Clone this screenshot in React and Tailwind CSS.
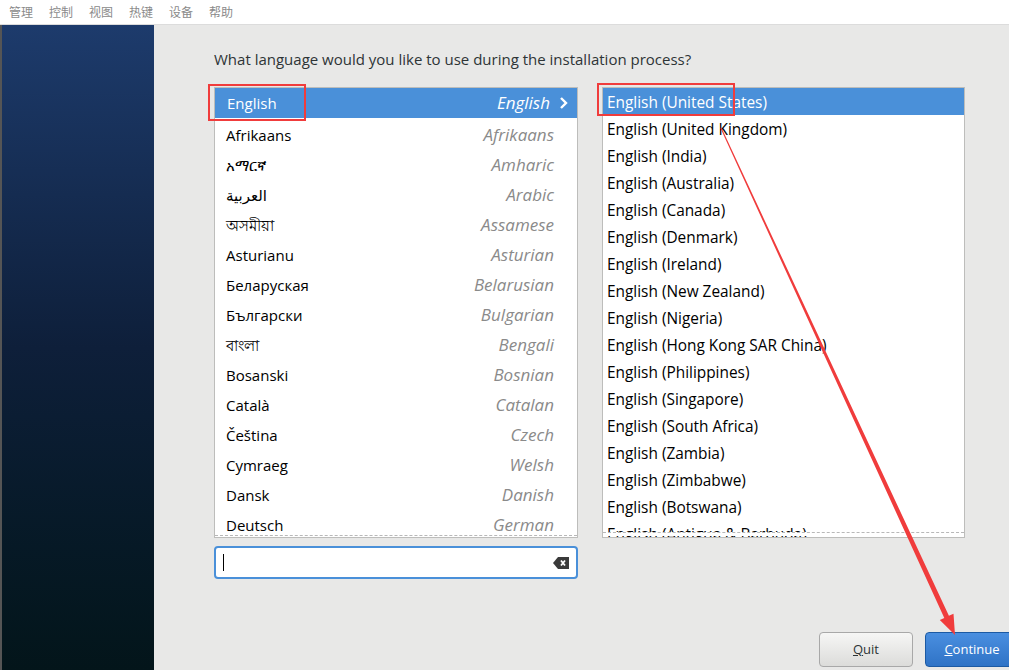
import React from "react";

const menu = ["管理", "控制", "视图", "热键", "设备", "帮助"];

const langs = [
  ["Afrikaans", "Afrikaans"],
  ["አማርኛ", "Amharic"],
  ["العربية", "Arabic"],
  ["অসমীয়া", "Assamese"],
  ["Asturianu", "Asturian"],
  ["Беларуская", "Belarusian"],
  ["Български", "Bulgarian"],
  ["বাংলা", "Bengali"],
  ["Bosanski", "Bosnian"],
  ["Català", "Catalan"],
  ["Čeština", "Czech"],
  ["Cymraeg", "Welsh"],
  ["Dansk", "Danish"],
  ["Deutsch", "German"],
];

const locales = [
  "United Kingdom",
  "India",
  "Australia",
  "Canada",
  "Denmark",
  "Ireland",
  "New Zealand",
  "Nigeria",
  "Hong Kong SAR China",
  "Philippines",
  "Singapore",
  "South Africa",
  "Zambia",
  "Zimbabwe",
  "Botswana",
  "Antigua & Barbuda",
];

const font = { fontFamily: '"Open Sans", "DejaVu Sans", "Noto Sans", sans-serif' };

function LanguageList() {
  return (
    <div className="w-[364px] h-[451px] bg-white border border-[#bdbdbb] overflow-hidden relative">
      <div className="h-[31px] bg-[#4a90d9] flex items-center pl-[12px] pr-[8px] text-white text-[15px] border-b border-white">
        <span className="flex-1">English</span>
        <span className="italic text-[17px] mr-[9px]">English</span>
        <svg width="10" height="14" viewBox="0 0 10 14">
          <path d="M2 2 L7 7 L2 12" stroke="white" strokeWidth="2.4" fill="none" />
        </svg>
      </div>
      {langs.map(([n, e]) => (
        <div key={e} className="h-[30px] flex items-center pt-[2px] pl-[11px] pr-[23px] text-[15px] text-black">
          <span className="flex-1">{n}</span>
          <span className="italic text-[17px] text-[#8a8a8a]">{e}</span>
        </div>
      ))}
      <div className="absolute left-0 right-0 bottom-[1px] border-t border-dashed border-[#b8b8b8]" />
    </div>
  );
}

function LocaleList() {
  return (
    <div className="w-[363px] h-[451px] bg-white border border-[#bdbdbb] overflow-hidden relative">
      <div className="h-[27px] bg-[#4a90d9] flex items-center pt-[2px] pl-[4px] text-white text-[15.4px]">
        English (United States)
      </div>
      {locales.map((l) => (
        <div key={l} className="h-[27px] flex items-center pt-[2px] pl-[4px] text-[15.4px] text-black">
          English ({l})
        </div>
      ))}
      <div className="absolute left-0 right-0 bottom-[1px] h-[4px] bg-white border-t border-dashed border-[#b8b8b8]" />
    </div>
  );
}

export default function App() {
  return (
    <div className="w-[1009px] h-[670px] flex flex-col overflow-hidden relative" style={font}>
      <div className="h-[25px] shrink-0 bg-white border-b border-[#dcdcdc] flex items-center pl-[9px] gap-[16px] text-[12px] text-[#8a8a8a]" style={{ fontFamily: '"Noto Sans CJK SC", sans-serif' }}>
        {menu.map((m) => (
          <span key={m} className="w-[24px]">{m}</span>
        ))}
      </div>
      <div className="flex flex-1 min-h-0">
        <div className="w-[154px] shrink-0 bg-gradient-to-b from-[#1d3b6c] via-[#0e1f3a] to-[#03151a] border-l-2 border-[#555]" />
        <div className="flex-1 min-w-0 bg-[#e8e8e7] pl-[60px] pt-[24px] flex flex-col relative">
          <div className="text-[15px] text-[#2e3436] h-[20px] flex items-center whitespace-nowrap">
            What language would you like to use during the installation process?
          </div>
          <div className="flex gap-[24px] mt-[18px]">
            <div className="flex flex-col gap-[8px] shrink-0">
              <LanguageList />
              <div className="w-[364px] h-[33px] bg-white border-2 border-[#4a90d9] rounded-[4px] flex items-center px-[7px]">
                <div className="w-[1px] h-[17px] bg-black" />
                <div className="flex-1" />
                <svg width="16" height="12" viewBox="0 0 16 12">
                  <path d="M5 0 H16 V12 H5 L0 6 Z" fill="#3a3a3a" />
                  <path d="M8 3.5 L12 8.5 M12 3.5 L8 8.5" stroke="white" strokeWidth="1.8" />
                </svg>
              </div>
            </div>
            <div className="shrink-0">
              <LocaleList />
            </div>
          </div>
          <div className="flex-1" />
          <div className="flex gap-[12px] pl-[605px] pb-[3px]">
            <button className="w-[94px] h-[35px] shrink-0 rounded-[4px] border border-[#a8a8a8] bg-gradient-to-b from-[#f6f6f5] to-[#dcdcda] text-[13px] text-[#2e3436]">
              <span className="underline">Q</span>uit
            </button>
            <button className="w-[94px] h-[35px] shrink-0 rounded-[4px] border border-[#1c5aa3] bg-gradient-to-b from-[#4a8fe0] to-[#2f73c6] text-[13px] text-white">
              <span className="underline">C</span>ontinue
            </button>
          </div>
        </div>
      </div>
      <div className="absolute left-[208px] top-[84px] w-[98px] h-[37px] border-2 border-[#f03c3c]" />
      <div className="absolute left-[597px] top-[83px] w-[138px] h-[33px] border-2 border-[#f03c3c]" />
      <svg className="absolute left-0 top-0 pointer-events-none" width="1009" height="670">
        <polygon
          points="720.5,128.2 721.5,127.8 948.9,615.8 953.5,613.7 955,635 939.8,619.9 944.3,617.9"
          fill="#f03c3c"
        />
      </svg>
    </div>
  );
}
